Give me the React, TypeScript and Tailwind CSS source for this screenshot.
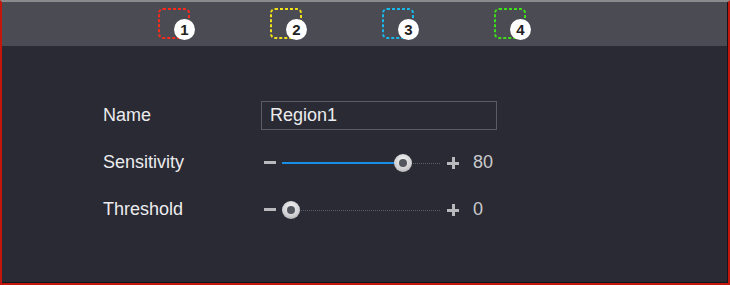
const REGIONS = [
  { n: 1, color: "#ff2a1a" },
  { n: 2, color: "#f2e01a" },
  { n: 3, color: "#19b9ee" },
  { n: 4, color: "#3ee01a" },
];

function RegionIcon({ n, color }: { n: number; color: string }) {
  return (
    <div className="relative h-[31px] w-[32px]">
      <svg width="32" height="31" viewBox="0 0 32 31" className="absolute left-0 top-0">
        <rect
          x="1"
          y="1"
          width="30"
          height="29"
          rx="4"
          fill="none"
          stroke={color}
          strokeWidth="2"
          strokeDasharray="3 2"
        />
      </svg>
      <div className="absolute left-[16px] top-[11px] flex h-[21px] w-[21px] items-center justify-center rounded-full bg-white text-[15px] font-bold leading-none text-[#222]">
        {n}
      </div>
    </div>
  );
}

function Slider({ value }: { value: number }) {
  // thumb centre travels 140px from the track start
  const pos = (value / 100) * 140;
  return (
    <div className="flex items-center">
      <div className="ml-[3px] h-[3px] w-[12px] bg-[#b9b9bd]" />
      <div className="relative ml-[6px] h-[18px] w-[158px]">
        <div className="absolute left-0 right-0 top-[9px] border-t border-dotted border-[#5c5d66]" />
        <div
          className="absolute left-0 top-[8px] h-[2px] bg-[#1a8de6]"
          style={{ width: pos + 9 }}
        />
        <div
          className="absolute top-0 flex h-[18px] w-[18px] items-center justify-center rounded-full bg-[radial-gradient(circle_at_50%_35%,#f4f4f4,#cfcfd2_60%,#9b9ca0)]"
          style={{ left: pos }}
        >
          <div className="h-[8px] w-[8px] rounded-full bg-[#55575f]" />
        </div>
      </div>
      <div className="relative ml-[7px] h-[12px] w-[12px]">
        <div className="absolute left-0 top-[5px] h-[3px] w-[12px] bg-[#b9b9bd]" />
        <div className="absolute left-[4.5px] top-0 h-[12px] w-[3px] bg-[#b9b9bd]" />
      </div>
      <span className="ml-[14px] text-[#c9c9cc]">{value}</span>
    </div>
  );
}

export default function App() {
  return (
    <div
      className="flex h-[285px] w-[730px] flex-col border-b-2 border-l-2 border-r-2 border-t-2 border-[#c1170d] border-t-[#8b8b8e] bg-[#292a33] text-[18px] text-[#ececee]"
      style={{ fontFamily: '"Liberation Sans", Arial, sans-serif' }}
    >
      <div className="flex h-full flex-col border-b border-r border-[#15161b]">
        {/* top bar with region selectors */}
        <div className="flex h-[44px] items-start gap-[80px] bg-[#4a4b53] pl-[156px] pt-[6px]">
          {REGIONS.map((r) => (
            <RegionIcon key={r.n} n={r.n} color={r.color} />
          ))}
        </div>

        {/* form */}
        <div className="flex flex-col gap-[18px] pl-[101px] pt-[55px]">
          <div className="flex h-[29px] items-center">
            <span className="w-[158px]">Name</span>
            <div className="flex h-[29px] w-[236px] items-center border border-[#5a5b63] pl-[8px]">
              Region1
            </div>
          </div>
          <div className="flex h-[29px] items-center">
            <span className="w-[158px]">Sensitivity</span>
            <Slider value={80} />
          </div>
          <div className="flex h-[29px] items-center">
            <span className="w-[158px]">Threshold</span>
            <Slider value={0} />
          </div>
        </div>
      </div>
    </div>
  );
}
